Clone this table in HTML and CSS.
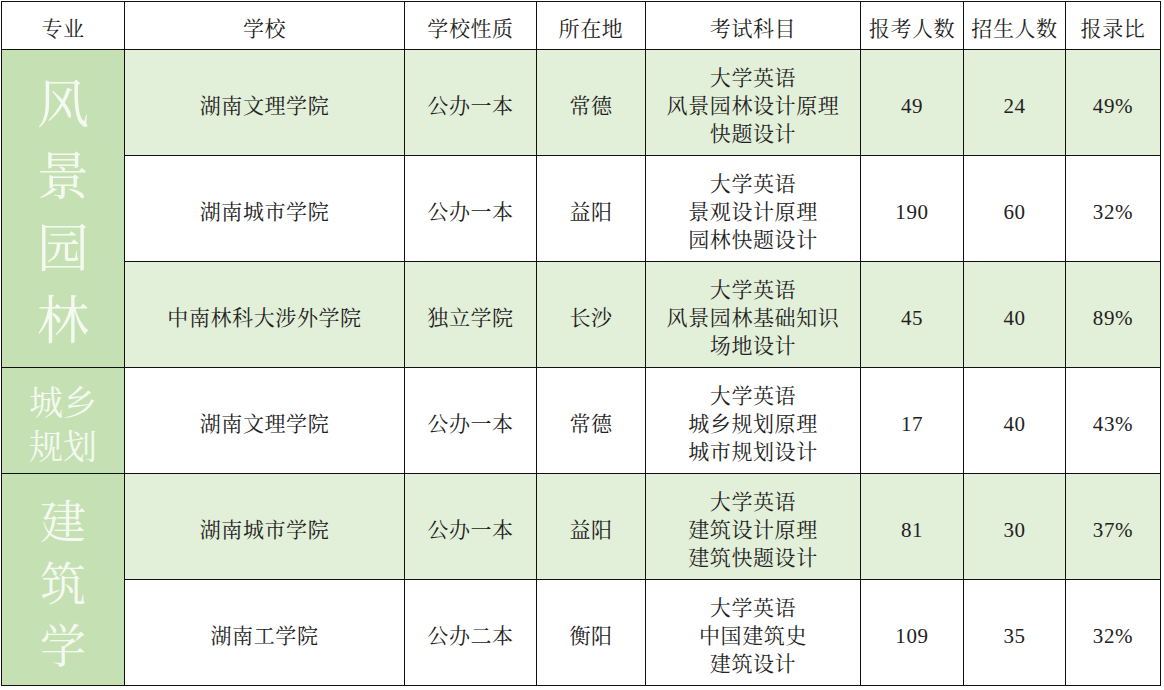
FILE: index.html
```html
<!DOCTYPE html>
<html lang="zh-CN">
<head>
<meta charset="utf-8">
<title>专业报考统计</title>
<link rel="stylesheet" href="styles.css">
</head>
<body>
<table class="sheet">
  <colgroup>
    <col class="c-major">
    <col class="c-school">
    <col class="c-type">
    <col class="c-city">
    <col class="c-subj">
    <col class="c-num">
    <col class="c-num2">
    <col class="c-ratio">
  </colgroup>
  <thead>
    <tr class="head">
      <th>专业</th>
      <th>学校</th>
      <th>学校性质</th>
      <th>所在地</th>
      <th>考试科目</th>
      <th>报考人数</th>
      <th>招生人数</th>
      <th>报录比</th>
    </tr>
  </thead>
  <tbody>
    <tr class="row tint">
      <td class="major" rowspan="3"><span class="major-text m1">风景园林</span></td>
      <td>湖南文理学院</td>
      <td>公办一本</td>
      <td>常德</td>
      <td class="subj">大学英语<br>风景园林设计原理<br>快题设计</td>
      <td class="num">49</td>
      <td class="num">24</td>
      <td class="num">49%</td>
    </tr>
    <tr class="row">
      <td>湖南城市学院</td>
      <td>公办一本</td>
      <td>益阳</td>
      <td class="subj">大学英语<br>景观设计原理<br>园林快题设计</td>
      <td class="num">190</td>
      <td class="num">60</td>
      <td class="num">32%</td>
    </tr>
    <tr class="row tint">
      <td>中南林科大涉外学院</td>
      <td>独立学院</td>
      <td>长沙</td>
      <td class="subj">大学英语<br>风景园林基础知识<br>场地设计</td>
      <td class="num">45</td>
      <td class="num">40</td>
      <td class="num">89%</td>
    </tr>
    <tr class="row">
      <td class="major"><span class="major-text m2">城乡规划</span></td>
      <td>湖南文理学院</td>
      <td>公办一本</td>
      <td>常德</td>
      <td class="subj">大学英语<br>城乡规划原理<br>城市规划设计</td>
      <td class="num">17</td>
      <td class="num">40</td>
      <td class="num">43%</td>
    </tr>
    <tr class="row tint">
      <td class="major" rowspan="2"><span class="major-text m3">建筑学</span></td>
      <td>湖南城市学院</td>
      <td>公办一本</td>
      <td>益阳</td>
      <td class="subj">大学英语<br>建筑设计原理<br>建筑快题设计</td>
      <td class="num">81</td>
      <td class="num">30</td>
      <td class="num">37%</td>
    </tr>
    <tr class="row">
      <td>湖南工学院</td>
      <td>公办二本</td>
      <td>衡阳</td>
      <td class="subj">大学英语<br>中国建筑史<br>建筑设计</td>
      <td class="num">109</td>
      <td class="num">35</td>
      <td class="num">32%</td>
    </tr>
  </tbody>
</table>
</body>
</html>
```
FILE: styles.css
```css
html, body {
  margin: 0;
  padding: 0;
  background: #ffffff;
}

body {
  font-family: "Liberation Serif", "Noto Serif CJK SC", "Noto Sans CJK SC", serif;
  color: #222222;
}

.sheet {
  margin: 1px 0 0 1px;
  border-collapse: collapse;
  table-layout: fixed;
  width: 1159px;
}

.c-major { width: 123px; }
.c-school { width: 280px; }
.c-type { width: 132px; }
.c-city { width: 109px; }
.c-subj { width: 215px; }
.c-num { width: 103px; }
.c-num2 { width: 102px; }
.c-ratio { width: 95px; }

.sheet th,
.sheet td {
  border: 1px solid #111111;
  padding: 6px 0 0 0;
  text-align: center;
  vertical-align: middle;
  font-size: 21px;
  font-weight: normal;
  line-height: 28px;
  letter-spacing: 0.6px;
}

.head th {
  height: 41px;
  background: #ffffff;
}

.row td {
  height: 99px;
  background: #ffffff;
}

.row.tint td {
  background: #e2efd9;
}

.sheet td.major {
  background: #c5e0b3;
  color: #f4faf0;
}

.major-text {
  display: inline-block;
  letter-spacing: 0;
  word-break: break-all;
  padding-top: 4px;
}

.m1 {
  font-size: 52px;
  line-height: 72px;
  width: 1em;
}

.m2 {
  font-size: 34px;
  line-height: 44px;
  width: 2em;
}

.m3 {
  font-size: 46px;
  line-height: 62px;
  width: 1em;
}

.num {
  letter-spacing: 0;
}
```
